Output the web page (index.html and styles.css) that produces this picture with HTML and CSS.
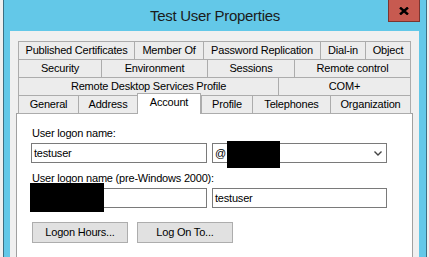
FILE: index.html
```html
<!DOCTYPE html>
<html lang="en">
<head>
  <meta charset="UTF-8">
  <title>Test User Properties</title>
  <link rel="stylesheet" href="styles.css">
</head>
<body>

  <div class="window">
    <div class="titlebar">
      <div class="title">Test User Properties</div>
      <div class="close">
        <svg width="10" height="8" viewBox="0 0 10 8">
          <path d="M1 0.5 L9 7.5 M9 0.5 L1 7.5" stroke="#000" stroke-width="2.4" fill="none"/>
        </svg>
      </div>
    </div>

    <div class="content">
      <div class="tabs">
        <div class="row">
          <div class="tab" style="width:116px">Published Certificates</div>
          <div class="tab" style="width:69px">Member Of</div>
          <div class="tab" style="width:117px">Password Replication</div>
          <div class="tab" style="width:45px">Dial-in</div>
          <div class="tab last" style="width:46px">Object</div>
        </div>
        <div class="row">
          <div class="tab" style="width:83px">Security</div>
          <div class="tab" style="width:106px">Environment</div>
          <div class="tab" style="width:87px">Sessions</div>
          <div class="tab last" style="width:117px">Remote control</div>
        </div>
        <div class="row">
          <div class="tab" style="width:260px">Remote Desktop Services Profile</div>
          <div class="tab last" style="width:133px">COM+</div>
        </div>
        <div class="row">
          <div class="tab" style="width:60px">General</div>
          <div class="tab" style="width:59px">Address</div>
          <div class="tab active" style="width:64px">Account</div>
          <div class="tab" style="width:51px">Profile</div>
          <div class="tab" style="width:78px">Telephones</div>
          <div class="tab last" style="width:81px">Organization</div>
        </div>
      </div>

      <div class="panel">
        <div class="label">User logon name:</div>
        <div class="fields">
          <div class="input">testuser</div>
          <div class="input select">
            <span>@</span>
            <div class="redact redact-domain"></div>
            <svg class="chevron" width="8" height="5" viewBox="0 0 8 5">
              <path d="M0.5 0.5 L4 4 L7.5 0.5" stroke="#444" stroke-width="1.4" fill="none"/>
            </svg>
          </div>
        </div>

        <div class="label second">User logon name (pre-Windows 2000):</div>
        <div class="fields">
          <div class="input">
            <div class="redact redact-netbios"></div>
          </div>
          <div class="input">testuser</div>
        </div>

        <div class="buttons">
          <div class="button">Logon Hours...</div>
          <div class="button">Log On To...</div>
        </div>
      </div>
    </div>
  </div>

</body>
</html>
```

FILE: styles.css
```css
body {
  margin: 0;
  background: #f0f0f0;
  font-family: "Liberation Sans", Arial, sans-serif;
  font-size: 11px;
  letter-spacing: -0.2px;
  color: #000;
  overflow: hidden;
}

.window {
  margin-left: 3px;
  width: 424px;
  height: 257px;
  box-sizing: border-box;
  background: #63c8e8;
  border-left: 1px solid #3d6f82;
  border-right: 1px solid #3d6f82;
  display: flex;
  flex-direction: column;
}

.titlebar {
  height: 31px;
  display: flex;
  justify-content: center;
  align-items: center;
  position: relative;
  flex-shrink: 0;
}

.title {
  font-size: 15px;
  letter-spacing: -0.3px;
  color: #1b1b1b;
  margin-top: -1px;
}

.close {
  position: absolute;
  top: 0;
  right: 6px;
  width: 32px;
  height: 22px;
  box-sizing: border-box;
  background: #c75a50;
  border: 1px solid #7a3530;
  border-top: none;
  display: flex;
  justify-content: center;
  align-items: center;
}

.content {
  flex: 1;
  background: #f0f0f0;
  margin: 0 7px 0 6px;
  padding: 10px 6px 0 6px;
  overflow: hidden;
}

.tabs {
  padding: 0 2px;
}

.row {
  display: flex;
  height: 18px;
}

.tab {
  box-sizing: border-box;
  height: 19px;
  border: 1px solid #acacac;
  border-right: none;
  background: #ececec;
  text-align: center;
  line-height: 17px;
  white-space: nowrap;
}

.tab.last {
  border-right: 1px solid #acacac;
}

.tab.active {
  position: relative;
  z-index: 1;
  background: #fff;
  height: 21px;
  margin-top: -2px;
  border-bottom: none;
  border-right: 1px solid #acacac;
  line-height: 16px;
}

.panel {
  background: #fff;
  border: 1px solid #a0a0a0;
  height: 200px;
  padding: 12px 0 0 14px;
}

.label {
  height: 15px;
  line-height: 15px;
  padding-left: 1px;
  margin-bottom: 2px;
}

.label.second {
  margin-top: 8px;
}

.fields {
  display: flex;
  gap: 5px;
}

.input {
  position: relative;
  box-sizing: border-box;
  width: 176px;
  height: 20px;
  border: 1px solid #7a7a7a;
  background: #fff;
  line-height: 18px;
  padding-left: 2px;
}

.input + .input {
  width: 175px;
}

.select {
  display: flex;
  align-items: center;
}

.chevron {
  margin-left: auto;
  margin-right: 4px;
}

.redact {
  position: absolute;
  background: #000;
}

.redact-domain {
  left: 14px;
  top: -3px;
  width: 53px;
  height: 27px;
}

.redact-netbios {
  left: -2px;
  top: -6px;
  width: 74px;
  height: 29px;
}

.buttons {
  display: flex;
  gap: 9px;
  margin-top: 14px;
  padding-left: 1px;
}

.button {
  box-sizing: border-box;
  width: 96px;
  height: 21px;
  background: #e1e1e1;
  border: 1px solid #adadad;
  text-align: center;
  line-height: 19px;
}
```
